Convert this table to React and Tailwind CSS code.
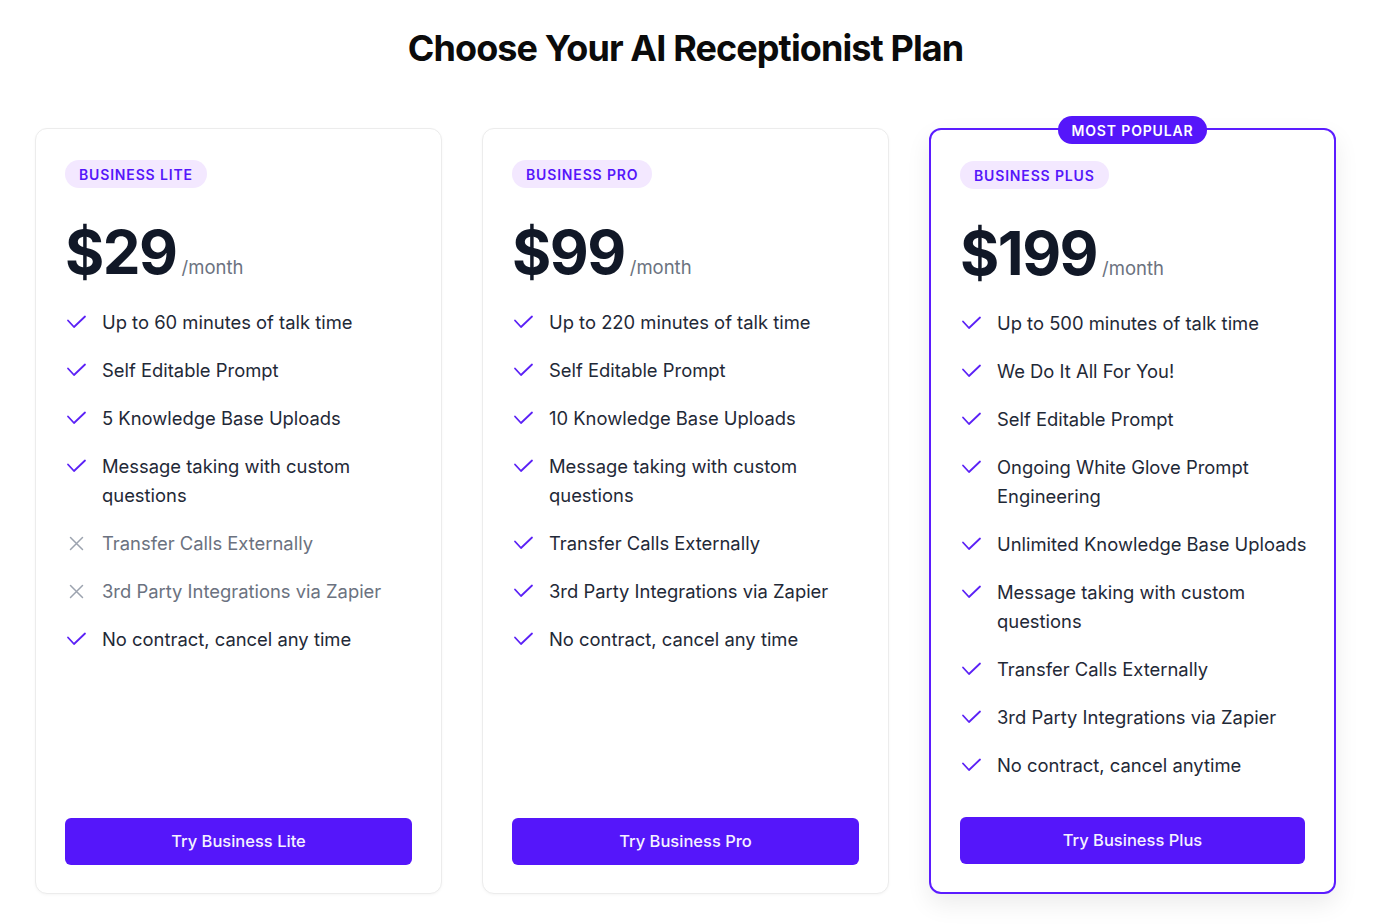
const plans = [
  {
    name: "Business Lite",
    price: "$29",
    features: [
      ["Up to 60 minutes of talk time", true],
      ["Self Editable Prompt", true],
      ["5 Knowledge Base Uploads", true],
      ["Message taking with custom questions", true],
      ["Transfer Calls Externally", false],
      ["3rd Party Integrations via Zapier", false],
      ["No contract, cancel any time", true],
    ],
  },
  {
    name: "Business Pro",
    price: "$99",
    features: [
      ["Up to 220 minutes of talk time", true],
      ["Self Editable Prompt", true],
      ["10 Knowledge Base Uploads", true],
      ["Message taking with custom questions", true],
      ["Transfer Calls Externally", true],
      ["3rd Party Integrations via Zapier", true],
      ["No contract, cancel any time", true],
    ],
  },
  {
    name: "Business Plus",
    price: "$199",
    popular: true,
    features: [
      ["Up to 500 minutes of talk time", true],
      ["We Do It All For You!", true],
      ["Self Editable Prompt", true],
      ["Ongoing White Glove Prompt Engineering", true],
      ["Unlimited Knowledge Base Uploads", true],
      ["Message taking with custom questions", true],
      ["Transfer Calls Externally", true],
      ["3rd Party Integrations via Zapier", true],
      ["No contract, cancel anytime", true],
    ],
  },
];

function Check() {
  return (
    <svg viewBox="0 0 22 20" fill="none" stroke="#5b21f6" strokeWidth="1.8" strokeLinecap="round" strokeLinejoin="round" className="w-[22px] h-[20px] shrink-0 mt-[4px]">
      <path d="M3 8.5L9 15L20 4.5" />
    </svg>
  );
}

function Cross() {
  return (
    <svg viewBox="0 0 22 20" fill="none" stroke="#9ca3af" strokeWidth="1.5" strokeLinecap="round" strokeLinejoin="round" className="w-[22px] h-[20px] shrink-0 mt-[4px]">
      <path d="M5.5 4.5L17.5 16.5M17.5 4.5L5.5 16.5" />
    </svg>
  );
}

function PlanCard({ plan }) {
  return (
    <div
      className={
        plan.popular
          ? "relative flex flex-col rounded-xl bg-white border-2 border-[#5b1cff] px-[29px] pt-[31px] pb-[28px] shadow-[0_10px_25px_rgba(0,0,0,0.08)]"
          : "relative flex flex-col rounded-xl bg-white border border-[#ececec] px-[29px] pt-[31px] pb-[28px] shadow-[0_1px_3px_rgba(0,0,0,0.04)]"
      }
    >
      {plan.popular && (
        <div className="absolute -top-[14px] left-1/2 -translate-x-1/2 rounded-full bg-[#5516fa] px-[14px] h-[28px] flex items-center text-[14px] font-semibold tracking-[0.06em] text-white">
          MOST POPULAR
        </div>
      )}
      <div>
        <span className="inline-flex items-center h-[28px] rounded-full bg-[#f3e8ff] px-[14px] text-[14px] font-semibold tracking-[0.06em] text-[#5516fa] uppercase">
          {plan.name}
        </span>
      </div>
      <div className="mt-[34px] flex items-baseline">
        <span className="text-[60px] leading-[60px] font-bold tracking-[-0.025em] text-[#111827]">{plan.price}</span>
        <span className="ml-[5px] text-[18.5px] text-[#6b7280]">/month</span>
      </div>
      <ul className="mt-[26px] flex flex-1 flex-col gap-[19px] -mr-[12px]">
        {plan.features.map(([text, ok]) => (
          <li key={text} className="flex gap-[15px]">
            {ok ? <Check /> : <Cross />}
            <span className={ok ? "text-[18.4px] leading-[29px] text-[#1f2937]" : "text-[18.4px] leading-[29px] text-[#6b7280]"}>
              {text}
            </span>
          </li>
        ))}
      </ul>
      <button className="mt-[37px] h-[47px] w-full rounded-md bg-[#5516fa] text-[#f5f2ff] text-[16.5px] font-medium">
        Try {plan.name}
      </button>
    </div>
  );
}

export default function App() {
  return (
    <div className="min-h-screen bg-white font-['Inter',sans-serif] px-[35px] pt-[26px]">
      <div className="w-[1301px]">
        <h1 className="text-center text-[36px] leading-[44px] font-bold tracking-[-0.025em] text-[#0b0b0b]">
          Choose Your AI Receptionist Plan
        </h1>
        <div className="mt-[58px] grid grid-cols-3 gap-[40px]">
          {plans.map((p) => (
            <PlanCard key={p.name} plan={p} />
          ))}
        </div>
      </div>
    </div>
  );
}
